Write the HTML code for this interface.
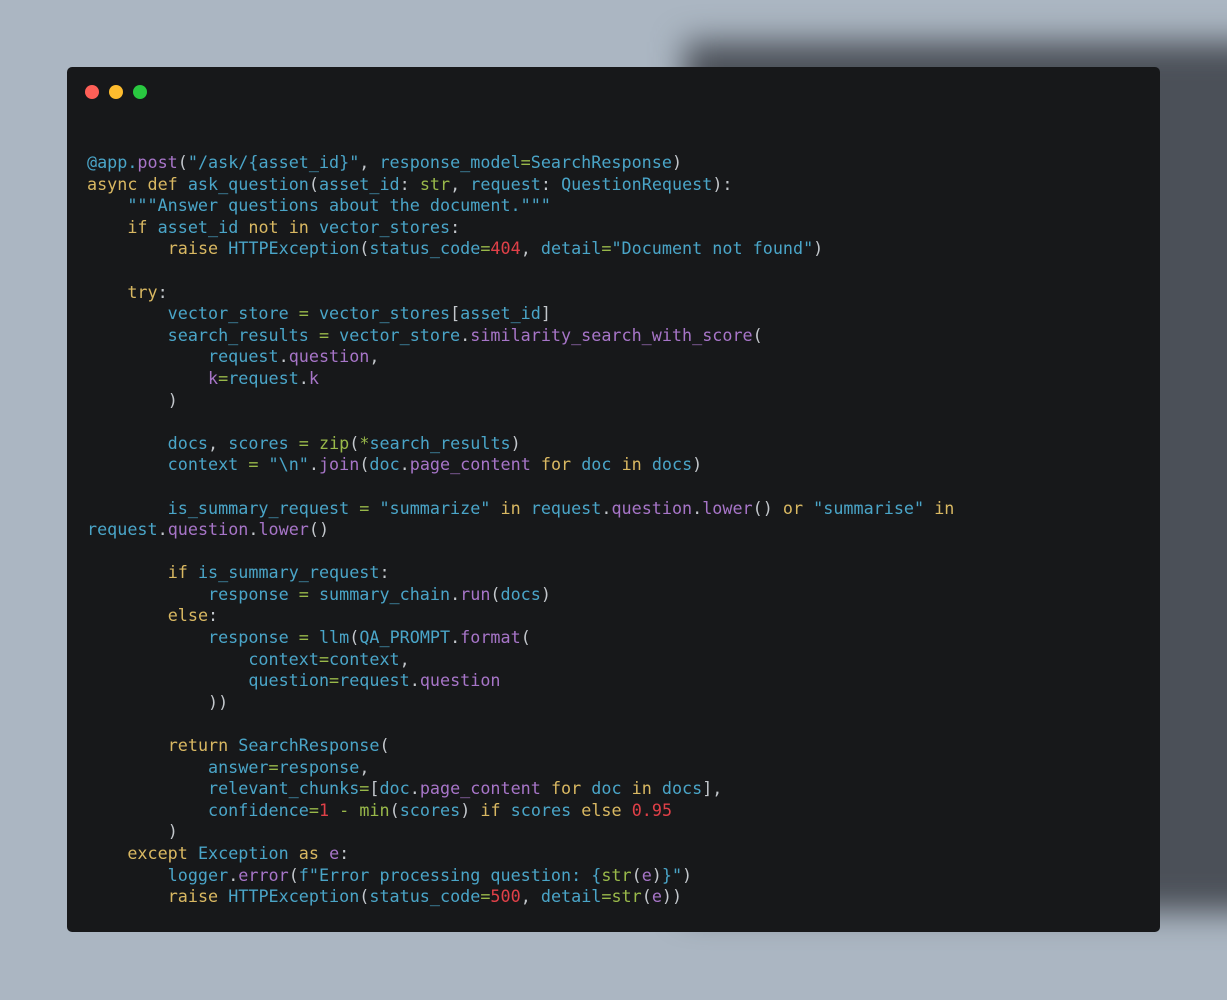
<!DOCTYPE html>
<html><head><meta charset="utf-8"><style>
html,body{margin:0;padding:0}
body{width:1227px;height:1000px;background:#abb6c2;position:relative;overflow:hidden}
.sh{position:absolute;left:685px;top:42px;width:600px;height:870px;background:#4b5058;filter:blur(16px)}
.win{position:absolute;left:67px;top:67px;width:1093px;height:865px;background:#17181a;border-radius:5px}
.dot{position:absolute;top:18px;width:14px;height:14px;border-radius:50%}
pre{position:absolute;left:20px;top:85px;margin:0;font-family:"DejaVu Sans Mono","Liberation Mono",monospace;font-size:16.75px;line-height:21.6px;color:#4aa5c8}
.k{color:#d9b862}.p{color:#a775c8}.g{color:#99b94a}.r{color:#e04048}.w{color:#c3c7cc}
</style></head><body>
<div class="sh"></div>
<div class="win">
<div class="dot" style="left:18px;background:#fe5f57"></div>
<div class="dot" style="left:42px;background:#febc2e"></div>
<div class="dot" style="left:66px;background:#29c840"></div>
<pre>@app.<span class="p">post</span><span class="w">(</span>"/ask/{asset_id}"<span class="w">,</span> response_model<span class="g">=</span>SearchResponse<span class="w">)</span>
<span class="k">async def</span> ask_question<span class="w">(</span>asset_id<span class="w">:</span> <span class="g">str</span><span class="w">,</span> request<span class="w">:</span> QuestionRequest<span class="w">):</span>
    """Answer questions about the document."""
    <span class="k">if</span> asset_id <span class="k">not in</span> vector_stores<span class="w">:</span>
        <span class="k">raise</span> HTTPException<span class="w">(</span>status_code<span class="g">=</span><span class="r">404</span><span class="w">,</span> detail<span class="g">=</span>"Document not found"<span class="w">)</span>

    <span class="k">try</span><span class="w">:</span>
        vector_store <span class="g">=</span> vector_stores<span class="w">[</span>asset_id<span class="w">]</span>
        search_results <span class="g">=</span> vector_store<span class="w">.</span><span class="p">similarity_search_with_score</span><span class="w">(</span>
            request<span class="w">.</span><span class="p">question</span><span class="w">,</span>
            <span class="p">k</span><span class="g">=</span>request<span class="w">.</span><span class="p">k</span>
        <span class="w">)</span>

        docs<span class="w">,</span> scores <span class="g">=</span> <span class="g">zip</span><span class="w">(</span><span class="g">*</span>search_results<span class="w">)</span>
        context <span class="g">=</span> "\n"<span class="w">.</span><span class="p">join</span><span class="w">(</span>doc<span class="w">.</span><span class="p">page_content</span> <span class="k">for</span> doc <span class="k">in</span> docs<span class="w">)</span>

        is_summary_request <span class="g">=</span> "summarize" <span class="k">in</span> request<span class="w">.</span><span class="p">question</span><span class="w">.</span><span class="p">lower</span><span class="w">()</span> <span class="k">or</span> "summarise" <span class="k">in</span>
request<span class="w">.</span><span class="p">question</span><span class="w">.</span><span class="p">lower</span><span class="w">()</span>

        <span class="k">if</span> is_summary_request<span class="w">:</span>
            response <span class="g">=</span> summary_chain<span class="w">.</span><span class="p">run</span><span class="w">(</span>docs<span class="w">)</span>
        <span class="k">else</span><span class="w">:</span>
            response <span class="g">=</span> llm<span class="w">(</span>QA_PROMPT<span class="w">.</span><span class="p">format</span><span class="w">(</span>
                context<span class="g">=</span>context<span class="w">,</span>
                question<span class="g">=</span>request<span class="w">.</span><span class="p">question</span>
            <span class="w">))</span>

        <span class="k">return</span> SearchResponse<span class="w">(</span>
            answer<span class="g">=</span>response<span class="w">,</span>
            relevant_chunks<span class="g">=</span><span class="w">[</span>doc<span class="w">.</span><span class="p">page_content</span> <span class="k">for</span> doc <span class="k">in</span> docs<span class="w">],</span>
            confidence<span class="g">=</span><span class="r">1</span> <span class="g">-</span> <span class="g">min</span><span class="w">(</span>scores<span class="w">)</span> <span class="k">if</span> scores <span class="k">else</span> <span class="r">0.95</span>
        <span class="w">)</span>
    <span class="k">except</span> Exception <span class="k">as</span> <span class="p">e</span><span class="w">:</span>
        logger<span class="w">.</span><span class="p">error</span><span class="w">(</span>f"Error processing question: {<span class="g">str</span><span class="w">(</span><span class="p">e</span><span class="w">)</span>}"<span class="w">)</span>
        <span class="k">raise</span> HTTPException<span class="w">(</span>status_code<span class="g">=</span><span class="r">500</span><span class="w">,</span> detail<span class="g">=</span><span class="g">str</span><span class="w">(</span><span class="p">e</span><span class="w">))</span></pre>
</div>
</body></html>
